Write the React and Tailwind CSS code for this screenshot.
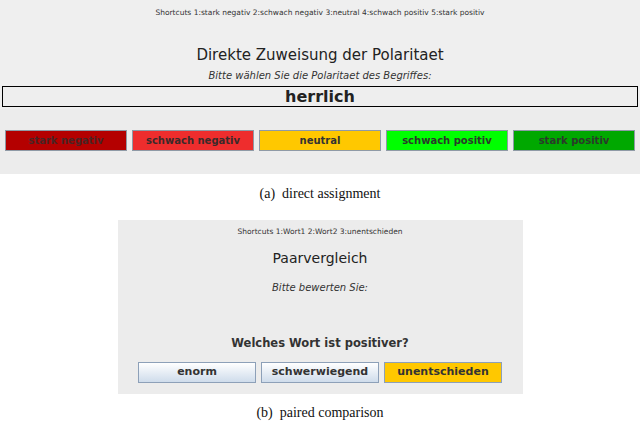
import React from 'react';

const sans = { fontFamily: '"DejaVu Sans", Verdana, sans-serif' };

const polarityButtons = [
    { label: 'stark negativ', cls: 'bg-[#b40000] text-[#4a2424]' },
    { label: 'schwach negativ', cls: 'bg-[#ee2d2d] text-[#3a2a2a]' },
    { label: 'neutral', cls: 'bg-[#ffc800] text-[#333]' },
    { label: 'schwach positiv', cls: 'bg-[#00ff00] text-[#2a3a2a]' },
    { label: 'stark positiv', cls: 'bg-[#00a800] text-[#2a3a2a]' },
];

const DirectAssignment = () => (
    <div className="w-full h-[174px] bg-[#efefef] flex flex-col items-center" style={sans}>
        <p className="mt-[8px] text-[7.5px] leading-[10px] text-[#333]">
            Shortcuts 1:stark negativ 2:schwach negativ 3:neutral 4:schwach positiv 5:stark positiv
        </p>
        <h2 className="mt-[28px] text-[15px] leading-[18px] text-[#222]">Direkte Zuweisung der Polaritaet</h2>
        <p className="mt-[6px] text-[10px] leading-[12px] italic text-[#333]">
            Bitte wählen Sie die Polaritaet des Begriffes:
        </p>
        <div className="mt-[4px] self-stretch mx-[2px] h-[21px] border-[1.5px] border-black bg-[#eeeeee] flex items-center justify-center">
            <span className="text-[16px] font-bold text-[#222] leading-none">herrlich</span>
        </div>
        <div className="self-stretch flex-1 bg-[#ececec] mt-[2px] pt-[21px] px-[5px] flex gap-[5px]">
            {polarityButtons.map((b) => (
                <div
                    key={b.label}
                    className={`flex-1 h-[21px] border border-[#8f9aa6] flex items-center justify-center text-[10px] font-bold ${b.cls}`}
                >
                    {b.label}
                </div>
            ))}
        </div>
    </div>
);

const PairButton = ({ label, highlight }) => (
    <div
        className={`w-[118px] h-[21px] border border-[#8da0b8] flex items-center justify-center text-[11px] font-bold text-[#333] ${
            highlight ? 'bg-[#ffc800]' : 'bg-gradient-to-b from-white to-[#cfdceb]'
        }`}
    >
        {label}
    </div>
);

const PairedComparison = () => (
    <div className="w-[405px] h-[174px] bg-[#ececec] flex flex-col items-center" style={sans}>
        <p className="mt-[7px] text-[7.5px] leading-[10px] text-[#333]">Shortcuts 1:Wort1 2:Wort2 3:unentschieden</p>
        <h2 className="mt-[13px] text-[14px] leading-[17px] text-[#222]">Paarvergleich</h2>
        <p className="mt-[15px] text-[10px] leading-[12px] italic text-[#333]">Bitte bewerten Sie:</p>
        <p className="mt-[42px] text-[11.5px] leading-[14px] font-bold text-[#333]">Welches Wort ist positiver?</p>
        <div className="mt-[12px] flex gap-[5px]">
            <PairButton label="enorm" />
            <PairButton label="schwerwiegend" />
            <PairButton label="unentschieden" highlight />
        </div>
    </div>
);

const Caption = ({ children, className }) => (
    <p
        className={`text-center text-[14px] leading-[16px] text-[#111] ${className}`}
        style={{ fontFamily: '"Liberation Serif", "Times New Roman", serif' }}
    >
        {children}
    </p>
);

export default function App() {
    return (
        <div className="w-[640px] h-[421px] bg-white flex flex-col items-center overflow-hidden">
            <DirectAssignment />
            <Caption className="mt-[12px]">(a)&nbsp; direct assignment</Caption>
            <div className="mt-[18px]">
                <PairedComparison />
            </div>
            <Caption className="mt-[11px]">(b)&nbsp; paired comparison</Caption>
        </div>
    );
}
